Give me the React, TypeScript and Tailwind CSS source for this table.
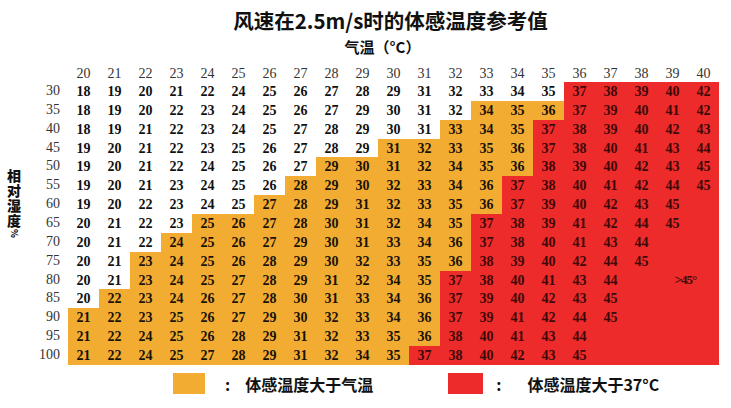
import React from "react";

const temps = Array.from({ length: 21 }, (_, i) => 20 + i);

// humidity, felt temperatures (from 20°C up), first orange column, first red column
const rows: [number, number[], number, number][] = [
  [30, [18, 19, 20, 21, 22, 24, 25, 26, 27, 28, 29, 31, 32, 33, 34, 35, 37, 38, 39, 40, 42], 16, 16],
  [35, [18, 19, 20, 22, 23, 24, 25, 26, 27, 29, 30, 31, 32, 34, 35, 36, 37, 39, 40, 41, 42], 13, 16],
  [40, [18, 19, 21, 22, 23, 24, 25, 27, 28, 29, 30, 31, 33, 34, 35, 37, 38, 39, 40, 42, 43], 12, 15],
  [45, [19, 20, 21, 22, 23, 25, 26, 27, 28, 29, 31, 32, 33, 35, 36, 37, 38, 40, 41, 43, 44], 10, 15],
  [50, [19, 20, 21, 22, 24, 25, 26, 27, 29, 30, 31, 32, 34, 35, 36, 38, 39, 40, 42, 43, 45], 8, 15],
  [55, [19, 20, 21, 23, 24, 25, 26, 28, 29, 30, 32, 33, 34, 36, 37, 38, 40, 41, 42, 44, 45], 7, 14],
  [60, [19, 20, 22, 23, 24, 25, 27, 28, 29, 31, 32, 33, 35, 36, 37, 39, 40, 42, 43, 45], 6, 14],
  [65, [20, 21, 22, 23, 25, 26, 27, 28, 30, 31, 32, 34, 35, 37, 38, 39, 41, 42, 44, 45], 4, 13],
  [70, [20, 21, 22, 24, 25, 26, 27, 29, 30, 31, 33, 34, 36, 37, 38, 40, 41, 43, 44], 3, 13],
  [75, [20, 21, 23, 24, 25, 26, 28, 29, 30, 32, 33, 35, 36, 38, 39, 40, 42, 44, 45], 2, 13],
  [80, [20, 21, 23, 24, 25, 27, 28, 29, 31, 32, 34, 35, 37, 38, 40, 41, 43, 44], 2, 12],
  [85, [20, 22, 23, 24, 26, 27, 28, 30, 31, 33, 34, 36, 37, 39, 40, 42, 43, 45], 1, 12],
  [90, [21, 22, 23, 25, 26, 27, 29, 30, 32, 33, 34, 36, 37, 39, 41, 42, 44, 45], 0, 12],
  [95, [21, 22, 24, 25, 26, 28, 29, 31, 32, 33, 35, 36, 38, 40, 41, 43, 44], 0, 12],
  [100, [21, 22, 24, 25, 27, 28, 29, 31, 32, 34, 35, 37, 38, 40, 42, 43, 45], 0, 11],
];

const cjk = "font-['Noto_Sans_CJK_SC',sans-serif]";
const serif = "font-['Liberation_Serif',serif]";

function Cell({ value, orange, red, extra }: { value?: number; orange: boolean; red: boolean; extra?: string }) {
  const bg = red ? "bg-[#ee2b2b] text-[#3d0808]" : orange ? "bg-[#f2ac32] text-[#1a1206]" : "bg-white text-[#111]";
  return (
    <div className={`w-[31px] h-full flex items-center justify-center ${bg}`}>
      {extra ? (
        <span className="translate-x-[13px] text-[13px] font-bold whitespace-nowrap tracking-[-1px]">{extra}</span>
      ) : (
        value
      )}
    </div>
  );
}

export default function App() {
  return (
    <div className="w-[731px] h-[408px] bg-white overflow-hidden">
      {/* Title */}
      <div className={`${cjk} text-center text-[#111]`}>
        <div className="pt-[6px] pl-[50px] h-[34px] text-[20.5px] leading-[28px] font-bold">风速在2.5m/s时的体感温度参考值</div>
        <div className="h-[30px] pl-[34px] text-[15px] leading-[26px] font-bold">气温（°C）</div>
      </div>

      <div className="flex">
        {/* Vertical axis label */}
        <div className={`${cjk} w-[28px] pt-[105px] flex justify-center text-[14px] font-black text-[#111]`}>
          <span className="[writing-mode:vertical-rl] leading-[20px] tracking-[1px]">
            相对湿度<span className="text-[9px]">%</span>
          </span>
        </div>

        {/* Row labels */}
        <div className={`${serif} w-[32px] text-right text-[14px] text-[#333]`}>
          <div className="h-[18px]" />
          {rows.map(([h]) => (
            <div key={h} className="h-[18.87px] leading-[18.87px]">
              {h}
            </div>
          ))}
        </div>

        {/* Grid */}
        <div className={`${serif} ml-[8px]`}>
          <div className="flex h-[18px] text-[14px] text-[#333]">
            {temps.map((t) => (
              <div key={t} className="w-[31px] flex items-center justify-center">
                {t}
              </div>
            ))}
          </div>
          {rows.map(([h, vals, o, r]) => (
            <div key={h} className="flex h-[18.87px] text-[14px] font-bold">
              {temps.map((t, i) => (
                <Cell
                  key={t}
                  value={vals[i]}
                  orange={i >= o}
                  red={i >= r}
                  extra={h === 80 && i === 19 ? ">45°" : undefined}
                />
              ))}
            </div>
          ))}
        </div>
      </div>

      {/* Legend */}
      <div className={`${cjk} flex items-center h-[38px] text-[16px] font-bold text-[#111]`}>
        <div className="ml-[173px] w-[32px] h-[21px] bg-[#f2ac32]" />
        <span className="ml-[20px]">:</span>
        <span className="ml-[15px]">体感温度大于气温</span>
        <div className="ml-[75px] w-[35px] h-[21px] bg-[#ee2b2b]" />
        <span className="ml-[13px]">:</span>
        <span className="ml-[26px]">体感温度大于37°C</span>
      </div>
    </div>
  );
}
